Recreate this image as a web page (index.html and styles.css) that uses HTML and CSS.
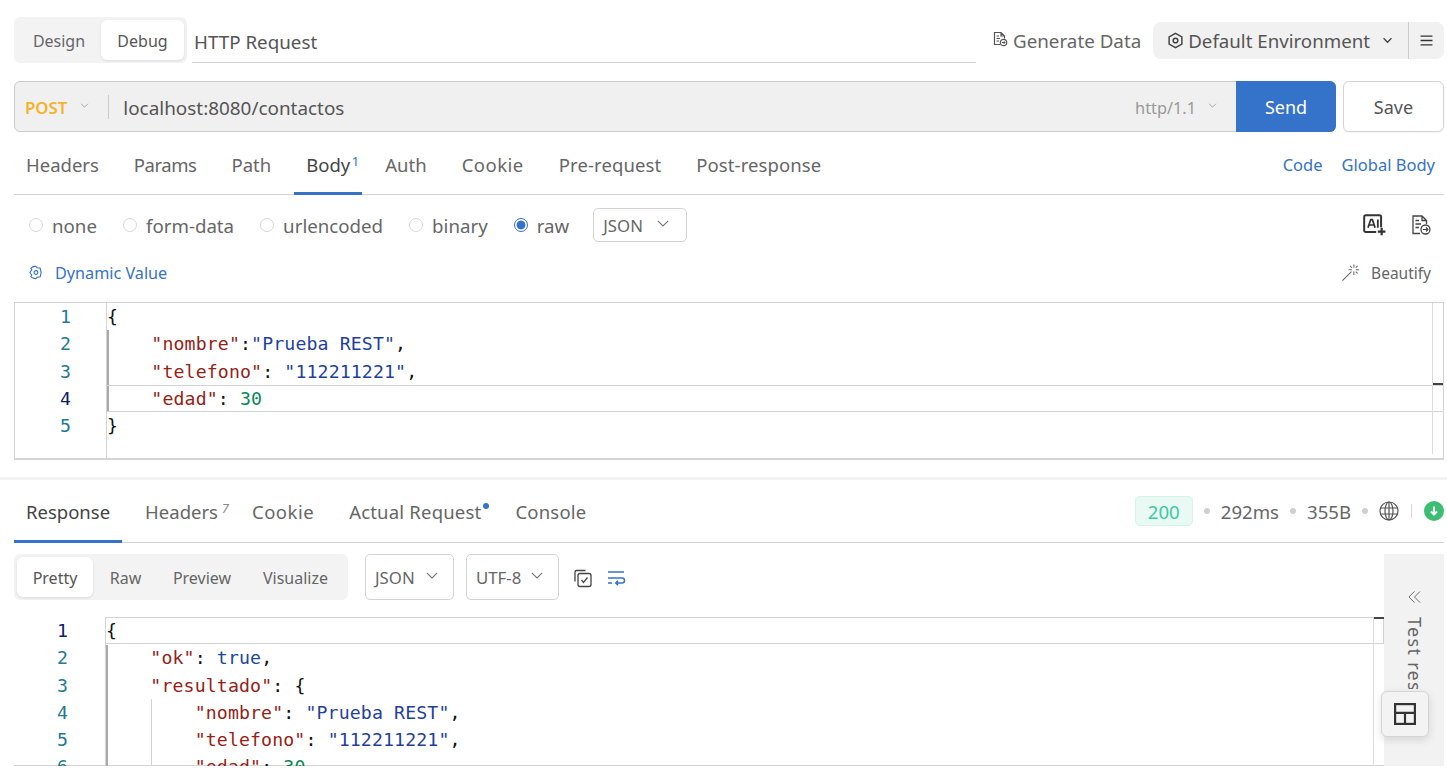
FILE: index.html
```html
<!DOCTYPE html>
<html lang="en">
<head>
<meta charset="utf-8">
<title>HTTP Request</title>
<link rel="stylesheet" href="styles.css">
</head>
<body>
<div class="app">
  <header class="top">
    <div class="seg seg-top">
      <span class="seg-item">Design</span>
      <span class="seg-item on">Debug</span>
    </div>
    <div class="title">HTTP Request</div>
    <div class="gen">
      <svg class="i17" viewBox="0 0 16 16" fill="none" stroke="#555" stroke-width="1.2"><path d="M8 13.500H2.500V1.500H9L12.500 5V7.500M9 1.500V5H12.500M4.500 5H7M4.500 7.500H8M4.500 10H7"/><circle cx="11.500" cy="11.500" r="3.200"/><path d="M9.800 11.500H13M11.800 10.200L13 11.500L11.800 12.800" stroke-width="1"/></svg>
      <span>Generate Data</span>
    </div>
    <div class="env">
      <div class="env-main">
        <svg class="i17" viewBox="0 0 16 16" fill="none" stroke="#444" stroke-width="1.400"><path d="M8 1.200L14 4.600V11.400L8 14.800L2 11.400V4.600Z"/><circle cx="8" cy="8" r="2.200"/></svg>
        <span class="env-name">Default Environment</span>
        <svg class="chev-env" viewBox="0 0 12 8" fill="none" stroke="#444" stroke-width="1.500"><path d="M1.500 1.500L6 6L10.500 1.500"/></svg>
      </div>
      <div class="env-menu">
        <svg class="i13" viewBox="0 0 12 10" fill="none" stroke="#333" stroke-width="1.200"><path d="M0.500 1H11.500M0.500 5H11.500M0.500 9H11.500"/></svg>
      </div>
    </div>
  </header>

  <section class="url-row">
    <div class="url">
      <span class="method">POST</span>
      <svg class="chev-s" viewBox="0 0 10 6" fill="none" stroke="#999" stroke-width="1"><path d="M1 1L5 5L9 1"/></svg>
      <span class="url-sep"></span>
      <span class="url-text">localhost:8080/contactos</span>
      <span class="proto">http/1.1</span>
      <svg class="chev-s chev-p" viewBox="0 0 10 6" fill="none" stroke="#999" stroke-width="1"><path d="M1 1L5 5L9 1"/></svg>
      <button class="send">Send</button>
    </div>
    <button class="save">Save</button>
  </section>

  <nav class="tabs req-tabs">
    <span class="tab">Headers</span>
    <span class="tab tight">Params</span>
    <span class="tab">Path</span>
    <span class="tab active">Body<sup class="sup">1</sup></span>
    <span class="tab">Auth</span>
    <span class="tab roomy">Cookie</span>
    <span class="tab mild">Pre-request</span>
    <span class="tab mild">Post-response</span>
    <span class="tabs-right">
      <span class="link">Code</span>
      <span class="link">Global Body</span>
    </span>
  </nav>

  <div class="radios">
    <label class="radio"><i class="dot"></i>none</label>
    <label class="radio"><i class="dot"></i>form-data</label>
    <label class="radio"><i class="dot"></i>urlencoded</label>
    <label class="radio"><i class="dot"></i>binary</label>
    <label class="radio"><i class="dot dot-on"></i>raw</label>
    <div class="select sel-body"><span>JSON</span><svg class="chev-sel" viewBox="0 0 12 7" fill="none" stroke="#777" stroke-width="1.100"><path d="M0.800 0.800L6 6L11.200 0.800"/></svg></div>
    <div class="radio-icons">
      <svg class="i23" viewBox="0 0 22 22" fill="none" stroke="#333" stroke-width="1.800"><path d="M13 17.500H3.500A1.500 1.500 0 0 1 2 16V3.500A1.500 1.500 0 0 1 3.500 2H16A1.500 1.500 0 0 1 17.500 3.500V13"/><path d="M5.500 13.500L8 6H9.500L12 13.500M6.500 11H11M14.500 6V13.500" stroke-width="1.600"/><path d="M18 13.500V20.500M14.500 17H21.500" stroke-width="2"/></svg>
      <svg class="i22" viewBox="0 0 22 22" fill="none" stroke="#444" stroke-width="1.300"><path d="M10 19.500H3V2H12L16.500 6.500V10M12 2V6.500H16.500M5.500 6.500H9M5.500 10H11M5.500 13.500H9"/><circle cx="15.500" cy="15.500" r="4.500"/><path d="M12.800 15.500H18M16 13.500L18 15.500L16 17.500" stroke-width="1.100"/></svg>
    </div>
  </div>

  <div class="dyn-row">
    <span class="dyn">
      <svg class="i15" viewBox="0 0 16 16" fill="none" stroke="#3572c9" stroke-width="1.200"><circle cx="8.500" cy="8" r="2"/><path d="M8 1.500A6.500 6.500 0 0 0 3 3.500L4 5L2 8L4 11L3 12.500A6.500 6.500 0 0 0 8 14.500L10 13L13 12.500L14 8L13 3.500L10 3Z"/></svg>
      <span>Dynamic Value</span>
    </span>
    <span class="beautify">
      <svg class="i19" viewBox="0 0 20 20" fill="none" stroke="#666" stroke-width="1.100"><path d="M1.500 18.500L11 9M13.500 1.500V5M13.500 9V12.500M8 7H11.500M15.500 7H19M9.500 3L11.500 5M15.500 9L17.500 11M17.500 3L15.500 5"/></svg>
      <span>Beautify</span>
    </span>
  </div>

  <div class="editor ed-req">
    <div class="gutter">
      <div class="ln">1</div><div class="ln">2</div><div class="ln">3</div><div class="ln cur">4</div><div class="ln">5</div>
    </div>
    <div class="code">
      <i class="guide g-req"></i>
      <i class="hl hl-req"></i>
      <i class="ruler r-req"></i>
      <div class="cl">{</div>
      <div class="cl">    <span class="k">"nombre"</span>:<span class="s">"Prueba REST"</span>,</div>
      <div class="cl">    <span class="k">"telefono"</span>: <span class="s">"112211221"</span>,</div>
      <div class="cl">    <span class="k">"edad"</span>: <span class="n">30</span></div>
      <div class="cl">}</div>
    </div>
  </div>

  <div class="split"></div>

  <nav class="tabs res-tabs">
    <span class="tab active">Response</span>
    <span class="tab">Headers<sup class="sup sup-i">7</sup></span>
    <span class="tab roomy t-cookie">Cookie</span>
    <span class="tab wide">Actual Request<i class="bdot"></i></span>
    <span class="tab wide t-console">Console</span>
    <span class="status">
      <span class="code200">200</span>
      <i class="sd"></i><span>292ms</span>
      <i class="sd"></i><span>355B</span>
      <i class="sd"></i>
      <svg class="i20" viewBox="0 0 20 20" fill="none" stroke="#555" stroke-width="1.200"><circle cx="10" cy="10" r="9"/><ellipse cx="10" cy="10" rx="4" ry="9"/><path d="M10 1V19M1.500 7H18.500M1.500 13H18.500"/></svg>
      <i class="vsep"></i>
      <svg class="i20" viewBox="0 0 20 20"><circle cx="10" cy="10" r="10" fill="#3cbf73"/><path d="M10 5.500V13M7 10.500L10 13.500L13 10.500" fill="none" stroke="#fff" stroke-width="2"/></svg>
    </span>
  </nav>

  <div class="res-body">
    <div class="res-main">
      <div class="res-tools">
        <div class="seg seg-res">
          <span class="seg-item on">Pretty</span>
          <span class="seg-item">Raw</span>
          <span class="seg-item">Preview</span>
          <span class="seg-item">Visualize</span>
        </div>
        <div class="select sel-json"><span>JSON</span><svg class="chev-sel" viewBox="0 0 12 7" fill="none" stroke="#777" stroke-width="1.100"><path d="M0.800 0.800L6 6L11.200 0.800"/></svg></div>
        <div class="select sel-utf"><span>UTF-8</span><svg class="chev-sel" viewBox="0 0 12 7" fill="none" stroke="#777" stroke-width="1.100"><path d="M0.800 0.800L6 6L11.200 0.800"/></svg></div>
        <svg class="i20 ic-copy" viewBox="0 0 20 20" fill="none" stroke="#444" stroke-width="1.300"><path d="M12.500 2.500H3.500A1.500 1.500 0 0 0 2 4V13.500"/><rect x="5" y="5.500" width="13" height="13" rx="2"/><path d="M8.500 12L10.500 14.500L14.500 9.500"/></svg>
        <svg class="i20 ic-wrap" viewBox="0 0 20 20" fill="none" stroke="#3572c9" stroke-width="1.500"><path d="M2 4H18M2 10H16A2.500 2.500 0 0 1 16 15H10M12 12.800L9.800 15L12 17.200M2 15H6"/></svg>
      </div>
      <div class="editor ed-res">
        <div class="gutter">
          <div class="ln cur">1</div><div class="ln">2</div><div class="ln">3</div><div class="ln">4</div><div class="ln">5</div><div class="ln">6</div>
        </div>
        <div class="code">
          <i class="guide g-res"></i>
          <i class="guide2"></i>
          <i class="hl hl-res"></i>
          <i class="ruler r-res"></i>
          <div class="cl">{</div>
          <div class="cl">    <span class="k">"ok"</span>: <span class="b">true</span>,</div>
          <div class="cl">    <span class="k">"resultado"</span>: {</div>
          <div class="cl">        <span class="k">"nombre"</span>: <span class="s">"Prueba REST"</span>,</div>
          <div class="cl">        <span class="k">"telefono"</span>: <span class="s">"112211221"</span>,</div>
          <div class="cl">        <span class="k">"edad"</span>: <span class="n">30</span></div>
        </div>
      </div>
    </div>
    <aside class="side">
      <svg class="dbl" viewBox="0 0 14 14" fill="none" stroke="#666" stroke-width="1"><path d="M7 1L1 7L7 13M13 1L7 7L13 13"/></svg>
      <div class="side-clip"><span class="side-text">Test results</span></div>
    </aside>
    <div class="float">
      <svg class="i22" viewBox="0 0 20 20" fill="none" stroke="#333" stroke-width="2"><rect x="1" y="1" width="18" height="18"/><path d="M1 9H19M10 9V19"/></svg>
    </div>
  </div>
</div>
</body>
</html>
```

FILE: styles.css
```css
* { box-sizing: border-box; }
html, body { margin: 0; padding: 0; height: 100%; overflow: hidden; background: #fff; }
body { font-family: "Noto Sans", "Open Sans", sans-serif; color: #555; font-size: 18px; }
.app { width: 1447px; height: 776px; padding: 17px 3px 0 14px; position: relative; }
svg { display: block; flex: none; }
.i13 { width: 13px; height: 11px; }
.i15 { width: 15px; height: 15px; }
.i17 { width: 17px; height: 17px; }
.i19 { width: 19px; height: 19px; }
.i20 { width: 20px; height: 20px; }
.i22 { width: 22px; height: 22px; }
.i23 { width: 24px; height: 24px; }

.top { display: flex; align-items: flex-start; height: 46px; }
.seg { display: flex; background: #f3f3f3; border-radius: 6px; padding: 3px; }
.seg-top { width: 173px; height: 46px; flex: none; }
.seg-item { display: flex; align-items: center; justify-content: center; color: #666; font-size: 16px; padding-top: 2px; }
.seg-item.on { background: #fff; border-radius: 6px; box-shadow: 0 1px 3px rgba(0,0,0,.1); color: #555; }
.seg-top .seg-item { width: 84px; height: 40px; }
.seg-top .seg-item.on { width: 83px; }
.title { width: 784px; margin-left: 5px; height: 46px; border-bottom: 1px solid #d4d4d4; padding: 9px 0 0 2px; font-size: 18.800px; line-height: 32px; flex: none; color: #555; }
.gen { display: flex; align-items: center; gap: 5px; margin-left: 16px; height: 46px; padding-top: 2px; flex: none; font-size: 18.800px; color: #666; }
.gen .i17 { width: 16px; height: 16px; margin-bottom: 4px; }
.env { display: flex; margin-left: 12px; margin-top: 5px; width: 291px; height: 37px; background: #f1f1f1; border-radius: 8px; flex: none; }
.env-main { flex: 1; display: flex; align-items: center; padding-left: 14px; border-right: 1px solid #ccc; }
.env-name { margin-left: 4px; font-size: 18.700px; color: #555; white-space: nowrap; }
.chev-env { width: 11px; height: 7px; margin-left: 12px; }
.env-menu { width: 35px; display: flex; align-items: center; justify-content: center; }

.url-row { display: flex; gap: 7px; margin-top: 18px; height: 51px; }
.url { flex: 1; display: flex; align-items: center; background: #f0f0f0; border: 1px solid #ccc; border-radius: 6px; padding-left: 10px; position: relative; }
.method { color: #f5b32a; font-weight: 600; font-size: 16.800px; padding-top: 2px; }
.chev-s { width: 9px; height: 5px; margin-left: 13px; margin-bottom: 3px; }
.url-sep { width: 1px; height: 24px; background: #ccc; margin-left: 19px; }
.url-text { margin-left: 14px; font-size: 18.900px; color: #555; flex: 1; padding-top: 2px; }
.proto { color: #999; font-size: 16.300px; padding-top: 2px; }
.chev-p { margin-left: 12px; margin-right: 19px; }
.send { width: 100px; height: 51px; margin: -1px -1px -1px 0; background: #3572c9; color: #fff; border: 0; border-radius: 0 6px 6px 0; font: 18px "Noto Sans", sans-serif; }
.save { width: 101px; flex: none; background: #fff; border: 1px solid #d4d4d4; border-radius: 6px; color: #555; font: 18px "Noto Sans", sans-serif; box-shadow: 0 1px 2px rgba(0,0,0,.05); }

.tabs { display: flex; align-items: stretch; gap: 11px; border-bottom: 1px solid #d4d4d4; }
.req-tabs { height: 63px; padding-top: 2px; }
.tab { position: relative; display: flex; align-items: center; padding: 0 12px; color: #666; font-size: 18.500px; white-space: nowrap; }
.tab.active { color: #444; }
.tab.active::after { content: ""; position: absolute; left: 0; right: 0; bottom: -1px; height: 3px; background: #3572c9; }
.tight { letter-spacing: -0.450px; }
.wide { letter-spacing: 0.200px; }
.mild { letter-spacing: 0.100px; }
.roomy { letter-spacing: 0.500px; }
.sup { position: absolute; right: 3px; top: 21px; font-size: 13px; line-height: 12px; color: #3572c9; }
.sup-i { right: 1px; top: 22px; font-style: italic; color: #888; }
.tabs-right { margin-left: auto; display: flex; align-items: center; gap: 19px; padding-right: 9px; }
.link { color: #3572c9; font-size: 16.500px; }

.radios { display: flex; align-items: center; height: 60px; padding-left: 15px; font-size: 18.700px; }
.radio { display: flex; align-items: center; gap: 9px; margin-right: 26px; color: #666; }
.dot { width: 14px; height: 14px; border-radius: 50%; border: 1px solid #d8d8d8; background: #fff; }
.dot-on { border-color: #3572c9; background: radial-gradient(circle, #3572c9 0 4px, #fff 4.800px); }
.select { display: flex; align-items: center; justify-content: space-between; border: 1px solid #d4d4d4; border-radius: 5px; color: #666; font-size: 16.800px; }
.sel-body { width: 94px; height: 34px; padding: 0 17px 0 9px; margin-left: -2px; }
.chev-sel { width: 12px; height: 7px; margin-bottom: 4px; }
.radio-icons { margin-left: auto; display: flex; align-items: center; gap: 24px; padding-right: 12px; }

.dyn-row { display: flex; justify-content: space-between; align-items: center; height: 35px; padding: 0 13px 0 14px; }
.dyn { display: flex; align-items: center; gap: 12px; color: #3572c9; font-size: 16.200px; }
.beautify { display: flex; align-items: center; gap: 11px; color: #666; font-size: 15.500px; }

.editor { display: flex; border: 1px solid #d4d4d4; font-family: "DejaVu Sans Mono", monospace; font-size: 18.200px; line-height: 27.300px; letter-spacing: 0.130px; overflow: hidden; }
.ed-req { height: 158px; margin-top: 12px; border-bottom-width: 2px; }
.gutter { width: 92px; flex: none; border-right: 1px solid #d4d4d4; }
.ln { color: #237893; text-align: right; padding-right: 35px; }
.ln.cur { color: #0b216f; }
.code { position: relative; flex: 1; color: #111; }
.cl { height: 27.300px; white-space: pre; position: relative; }
.k { color: #962115; }
.s { color: #1f3f9f; }
.n { color: #098658; }
.b { color: #174a9a; }
.guide { position: absolute; left: 0; width: 2px; background: #aaa; }
.g-req { top: 27px; height: 82px; }
.hl { position: absolute; left: 0; height: 27px; border-top: 1px solid #d4d4d4; border-bottom: 1px solid #d4d4d4; }
.hl-req { top: 82px; right: 0; }
.ruler { position: absolute; top: 0; bottom: 4px; width: 1px; background: #dcdcdc; }
.ruler::after { content: ""; position: absolute; left: 1px; width: 10px; height: 2px; background: #444; }
.r-req { right: 10px; }
.r-req::after { top: 80px; }

.split { height: 3px; margin: 17px -3px 0 -14px; background: #f3f3f3; }

.res-tabs { height: 63px; padding-top: 0; }
.t-cookie { margin-left: -1px; }
.t-console { margin-left: -1px; }
.bdot { position: absolute; right: 4px; top: 23px; width: 6px; height: 6px; border-radius: 50%; background: #3572c9; }
.status { margin-left: auto; display: flex; align-items: center; gap: 11px; font-size: 18.600px; color: #666; }
.code200 { width: 58px; height: 30px; display: flex; align-items: center; justify-content: center; background: #e9f9f4; border: 1px solid #d5f3ea; border-radius: 5px; color: #3cc9a0; }
.sd { width: 6px; height: 6px; border-radius: 50%; background: #d0d0d0; }
.vsep { width: 1px; height: 14px; background: #d8d8d8; margin: 0 1px; }

.res-body { display: flex; position: relative; height: 223px; padding-top: 11px; border-bottom: 1px solid #d4d4d4; }
.res-main { flex: 1; min-width: 0; }
.res-tools { display: flex; align-items: flex-start; height: 46px; }
.seg-res { width: 334px; height: 46px; }
.seg-res .seg-item { height: 40px; }
.seg-res .seg-item:nth-child(1) { width: 76px; }
.seg-res .seg-item:nth-child(2) { width: 65px; }
.seg-res .seg-item:nth-child(3) { width: 88px; }
.seg-res .seg-item:nth-child(4) { width: 99px; }
.sel-json { width: 89px; height: 46px; margin-left: 17px; padding: 0 15px 0 9px; }
.sel-utf { width: 93px; height: 46px; margin-left: 12px; padding: 0 15px 0 9px; }
.ic-copy { margin: 14px 0 0 14px; }
.ic-wrap { margin: 14px 0 0 13px; }
.ed-res { height: 149px; margin-top: 17px; border: 0; }
.ed-res .gutter { width: 91px; border-right: 0; }
.ed-res .ln { padding-right: 37px; }
.ed-res .code { border-top: 1px solid #d4d4d4; border-left: 1px solid #d4d4d4; }
.ed-res .cl:first-of-type { height: 26.300px; line-height: 26.300px; }
.g-res { top: 27px; bottom: 0; left: 0; }
.guide2 { position: absolute; left: 45px; top: 81px; bottom: 0; width: 1px; background: #d4d4d4; }
.hl-res { top: 0; right: 0; height: 26px; border-top: 0; border-right: 1px solid #d4d4d4; }
.r-res { right: 10px; bottom: 0; }
.r-res::after { top: -1px; }

.side { width: 60px; flex: none; background: #f2f2f2; padding-top: 36px; display: flex; flex-direction: column; align-items: center; height: 212px; }
.dbl { width: 13px; height: 14px; }
.side-clip { height: 72px; overflow: hidden; margin-top: 13px; margin-left: 1px; }
.side-text { writing-mode: vertical-rl; white-space: nowrap; font-size: 18px; letter-spacing: 1.300px; display: block; color: #666; }
.float { position: absolute; right: 15px; bottom: 28px; width: 48px; height: 46px; display: flex; align-items: center; justify-content: center; background: #f3f3f3; border: 1px solid #d4d4d4; border-radius: 6px; box-shadow: 0 3px 8px rgba(0,0,0,.12); }
```
